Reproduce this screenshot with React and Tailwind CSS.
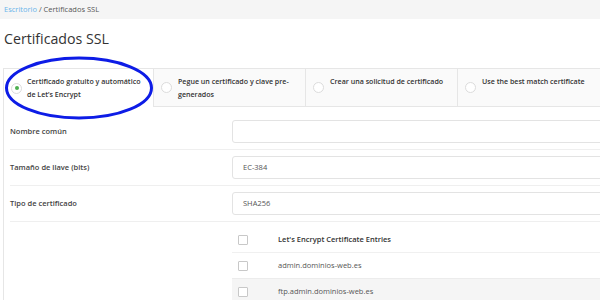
import { useState } from 'react';

const tabs = [
  { id: 'le', label: 'Certificado gratuito y automático de Let\u2019s Encrypt' },
  { id: 'paste', label: 'Pegue un certificado y clave pre-generados' },
  { id: 'csr', label: 'Crear una solicitud de certificado' },
  { id: 'best', label: 'Use the best match certificate' },
];

const fields = [
  { label: 'Nombre común', value: '' },
  { label: 'Tamaño de llave (bits)', value: 'EC-384' },
  { label: 'Tipo de certificado', value: 'SHA256' },
];

const entries = ['admin.dominios-web.es', 'ftp.admin.dominios-web.es'];

function Radio({ checked }) {
  return (
    <span className="w-[11px] h-[11px] shrink-0 rounded-full border border-[#dcdcdc] bg-white flex items-center justify-center">
      {checked && <span className="w-[4px] h-[4px] rounded-full bg-[#4caf50]" />}
    </span>
  );
}

function Checkbox() {
  return <span className="block w-[10px] h-[10px] border border-[#c8c8c8] bg-white rounded-[1px]" />;
}

export default function App() {
  const [active, setActive] = useState('le');

  return (
    <div className="w-[600px] h-[300px] overflow-hidden bg-white text-[#333] font-['Open_Sans',sans-serif]">
      {/* breadcrumb */}
      <div className="h-[19px] bg-[#f5f5f5] px-[4px] flex items-center text-[7.5px]">
        <span className="text-[#6ab4ea]">Escritorio</span>
        <span className="text-[#555]">&nbsp;/ Certificados SSL</span>
      </div>

      <h1 className="px-[4px] pt-[10px] h-[49px] text-[14.2px] leading-[20px] text-[#333]">Certificados SSL</h1>

      <div className="relative ml-[3px] w-[800px]">
        {/* tabs */}
        <div className="flex h-[39px]">
          {tabs.map((t) => {
            const on = t.id === active;
            return (
              <button
                key={t.id}
                onClick={() => setActive(t.id)}
                className={
                  on
                    ? 'w-[150px] flex items-center gap-[5px] px-[7px] pt-[6px] pb-[6px] text-left border-l border-t border-[#e6e6e6] bg-white'
                    : 'w-[152px] flex items-center gap-[6px] px-[7px] pt-[6px] pb-[6px] text-left border-l border-t border-b border-[#e6e6e6] bg-[#fafafa]'
                }
              >
                <Radio checked={on} />
                <span className="self-start text-[7.1px] leading-[13px] font-semibold text-[#333]">{t.label}</span>
              </button>
            );
          })}
        </div>

        {/* annotation ellipse */}
        <svg className="absolute left-[1px] top-[-12px] pointer-events-none" width="150" height="64" viewBox="0 0 150 64">
          <ellipse cx="75" cy="32" rx="72.5" ry="30" fill="none" stroke="#0d1ce6" strokeWidth="3" />
        </svg>

        {/* panel */}
        <div className="border-l border-[#e6e6e6] pl-[6px] pt-[7px] h-[200px]">
          {fields.map((f) => (
            <div key={f.label} className="flex items-center border-b border-[#efefef] py-[6px]">
              <label className="w-[222px] text-[7.5px] font-semibold text-[#444]">{f.label}</label>
              <div className="flex-1 h-[23px] border border-[#e3e3e3] rounded-[3px] px-[10px] flex items-center text-[7.5px] text-[#555]">
                {f.value}
              </div>
            </div>
          ))}

          <div className="ml-[222px] mt-[6px]">
            <div className="flex items-center h-[25px] border-b border-[#f0f0f0]">
              <div className="w-[46px] pl-[6px]"><Checkbox /></div>
              <span className="text-[7.5px] font-semibold text-[#333]">Let&apos;s Encrypt Certificate Entries</span>
            </div>
            {entries.map((e, i) => (
              <div key={e} className={'flex items-center h-[26px] ' + (i % 2 === 1 ? 'bg-[#f5f5f5]' : 'bg-white border-b border-[#ececec]')}>
                <div className="w-[46px] pl-[6px]"><Checkbox /></div>
                <span className="text-[7.5px] text-[#555]">{e}</span>
              </div>
            ))}
          </div>
        </div>
      </div>
    </div>
  );
}
